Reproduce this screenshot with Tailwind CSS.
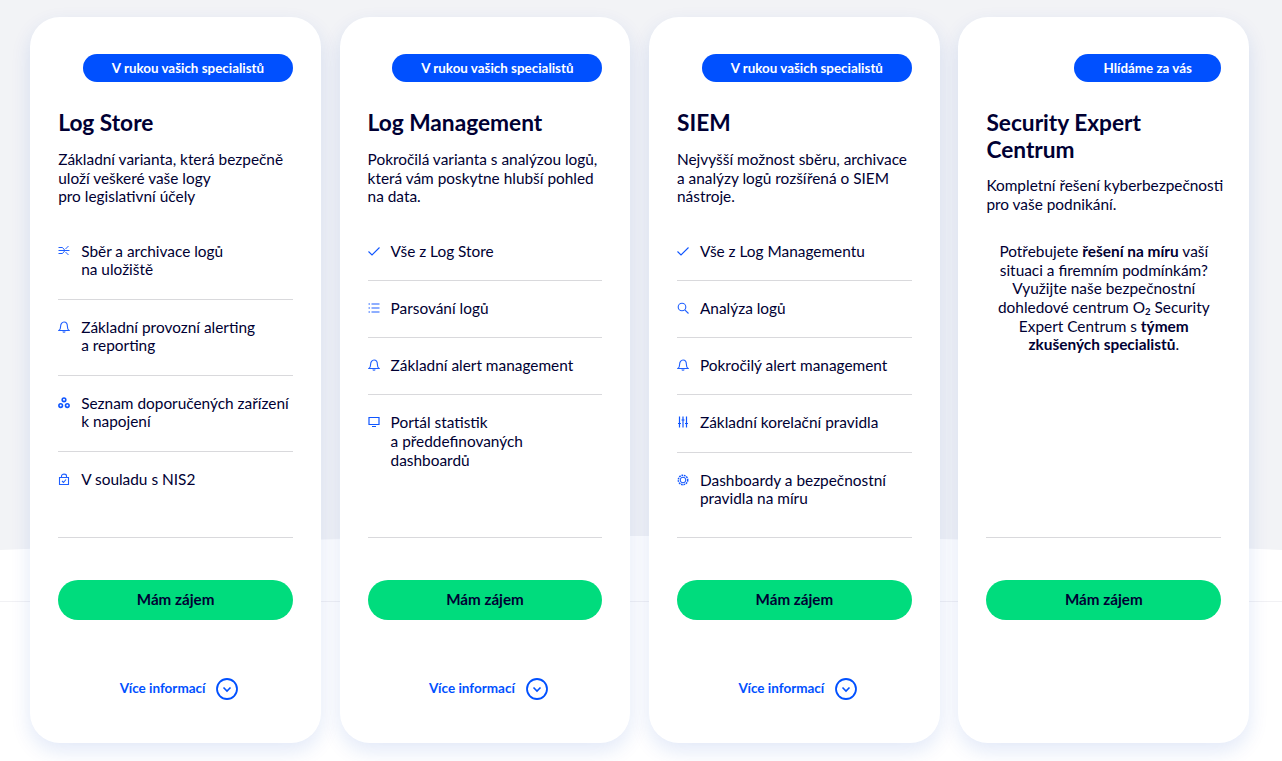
<!doctype html><html><head><meta charset="utf-8"><script src="https://cdn.jsdelivr.net/npm/@tailwindcss/browser@4"></script></head><body class="m-0">
<div class="relative w-[1282px] h-[761px] overflow-hidden bg-[#f2f3f6] font-['Lato',sans-serif] text-[#000033] text-[15.4px] leading-[18.67px]">
<svg class="absolute inset-0" width="1282" height="761" viewBox="0 0 1282 761"><path d="M0 550Q641 522 1282 550V761H0Z" fill="#fff"/><path d="M0 601.5H1282" stroke="#f1f1f4" stroke-width="1"/></svg>
<div class="relative grid grid-cols-4 gap-[18.6px] w-[1219px] ml-[30.2px] pt-[17px]">

<!-- card 1 -->
<article class="bg-white rounded-[30px] h-[726px] px-[28px] pt-[37px] flex flex-col shadow-[0_8px_20px_rgba(20,70,200,0.12)]">
<div class="flex justify-end"><span class="h-[28px] w-[210px] text-center rounded-full bg-[#0050ff] text-white font-bold text-[13.4px] leading-[28px] whitespace-nowrap">V rukou vašich specialistů</span></div>
<header class="h-[113px] mt-[27px]"><h2 class="font-bold text-[22.7px] leading-[27px]">Log Store</h2><p class="mt-[14px]">Základní varianta, která bezpečně<br>uloží veškeré vaše logy<br>pro legislativní účely</p></header>
<ul class="h-[314px] mt-[1.5px] border-b border-[#d9d9dc]">
<li class="flex gap-[11px] pt-[18px] pb-[19.67px] border-b border-[#d9d9dc]"><svg class="mt-[3px] shrink-0" width="12" height="12" viewBox="0 0 12 12" fill="none" stroke="#1f5fff" stroke-width="1"><path d="M.5 2.500H4.500L7 5.500M.5 5.500H11.500M.5 8.500H4.500L7 5.500M7.500 4L10.500 1M7.500 7L10.500 10"/></svg><span>Sběr a archivace logů<br>na uložiště</span></li>
<li class="flex gap-[11px] pt-[18px] pb-[19.67px] border-b border-[#d9d9dc]"><svg class="mt-[3px] shrink-0" width="12" height="12" viewBox="0 0 12 12" fill="none" stroke="#1f5fff" stroke-width="1.100"><path d="M1 9.500C2.300 8.500 2.600 7.500 2.600 5.500C2.600 3 4 1 6 1S9.400 3 9.400 5.500C9.400 7.500 9.700 8.500 11 9.500ZM4.800 10.500C5.200 11.500 6.800 11.500 7.200 10.500"/></svg><span>Základní provozní alerting<br>a reporting</span></li>
<li class="flex gap-[11px] pt-[18px] pb-[19.67px] border-b border-[#d9d9dc]"><svg class="mt-[3px] shrink-0" width="12" height="12" viewBox="0 0 12 12" fill="none" stroke="#0f55ff" stroke-width="1.600"><circle cx="6" cy="2.800" r="1.800"/><circle cx="2.700" cy="8.600" r="1.800"/><circle cx="9.300" cy="8.600" r="1.800"/></svg><span>Seznam doporučených zařízení<br>k napojení</span></li>
<li class="flex gap-[11px] pt-[18px] pb-[19.67px]"><svg class="mt-[3px] shrink-0" width="12" height="12" viewBox="0 0 12 12" fill="none" stroke="#1f5fff" stroke-width="1.100"><path d="M1.500 4.500H10.500V11.500H1.500ZM3.500 4.500V3C3.500 .5 8.500 .5 8.500 3V4.500M4 8L5.500 9.500L8 6.500"/></svg><span>V souladu s NIS2</span></li>
</ul>
<a class="mt-[42px] h-[40px] shrink-0 rounded-full bg-[#00dc7d] font-bold text-[15.2px] leading-[38px] text-center">Mám zájem</a>
<a class="mt-[58px] h-[22px] pl-[7px] flex items-center justify-center gap-[11px] text-[#0050ff] font-bold text-[13.5px]">Více informací<svg width="22" height="22" viewBox="0 0 22 22" fill="none" stroke="#0050ff"><circle cx="11" cy="11" r="10" stroke-width="1.800"/><path d="M7.500 9.500L11 13L14.500 9.500" stroke-width="1.600"/></svg></a>
</article>

<!-- card 2 -->
<article class="bg-white rounded-[30px] h-[726px] px-[28px] pt-[37px] flex flex-col shadow-[0_8px_20px_rgba(20,70,200,0.12)]">
<div class="flex justify-end"><span class="h-[28px] w-[210px] text-center rounded-full bg-[#0050ff] text-white font-bold text-[13.4px] leading-[28px] whitespace-nowrap">V rukou vašich specialistů</span></div>
<header class="h-[113px] mt-[27px]"><h2 class="font-bold text-[22.7px] leading-[27px]">Log Management</h2><p class="mt-[14px]">Pokročilá varianta s analýzou logů,<br>která vám poskytne hlubší pohled<br>na data.</p></header>
<ul class="h-[314px] mt-[1.5px] border-b border-[#d9d9dc]">
<li class="flex gap-[11px] pt-[18px] pb-[19.67px] border-b border-[#d9d9dc]"><svg class="mt-[3px] shrink-0" width="12" height="12" viewBox="0 0 12 12" fill="none" stroke="#0f55ff" stroke-width="1.100"><path d="M.5 6.500L4 10L11.500 2.500"/></svg><span>Vše z Log Store</span></li>
<li class="flex gap-[11px] pt-[18px] pb-[19.67px] border-b border-[#d9d9dc]"><svg class="mt-[3px] shrink-0" width="12" height="12" viewBox="0 0 12 12" fill="none" stroke="#1f5fff" stroke-width="1.100"><path d="M3.500 2H11.500M3.500 6H11.500M3.500 10H11.500M.5 2H2M.5 6H2M.5 10H2"/></svg><span>Parsování logů</span></li>
<li class="flex gap-[11px] pt-[18px] pb-[19.67px] border-b border-[#d9d9dc]"><svg class="mt-[3px] shrink-0" width="12" height="12" viewBox="0 0 12 12" fill="none" stroke="#1f5fff" stroke-width="1.100"><path d="M1 9.500C2.300 8.500 2.600 7.500 2.600 5.500C2.600 3 4 1 6 1S9.400 3 9.400 5.500C9.400 7.500 9.700 8.500 11 9.500ZM4.800 10.500C5.200 11.500 6.800 11.500 7.200 10.500"/></svg><span>Základní alert management</span></li>
<li class="flex gap-[11px] pt-[18px] pb-[19.67px]"><svg class="mt-[3px] shrink-0" width="12" height="12" viewBox="0 0 12 12" fill="none" stroke="#0f55ff" stroke-width="1.200"><path d="M1 1.500H11V8.500H1ZM4 10.500H8"/></svg><span>Portál statistik<br>a předdefinovaných<br>dashboardů</span></li>
</ul>
<a class="mt-[42px] h-[40px] shrink-0 rounded-full bg-[#00dc7d] font-bold text-[15.2px] leading-[38px] text-center">Mám zájem</a>
<a class="mt-[58px] h-[22px] pl-[7px] flex items-center justify-center gap-[11px] text-[#0050ff] font-bold text-[13.5px]">Více informací<svg width="22" height="22" viewBox="0 0 22 22" fill="none" stroke="#0050ff"><circle cx="11" cy="11" r="10" stroke-width="1.800"/><path d="M7.500 9.500L11 13L14.500 9.500" stroke-width="1.600"/></svg></a>
</article>

<!-- card 3 -->
<article class="bg-white rounded-[30px] h-[726px] px-[28px] pt-[37px] flex flex-col shadow-[0_8px_20px_rgba(20,70,200,0.12)]">
<div class="flex justify-end"><span class="h-[28px] w-[210px] text-center rounded-full bg-[#0050ff] text-white font-bold text-[13.4px] leading-[28px] whitespace-nowrap">V rukou vašich specialistů</span></div>
<header class="h-[113px] mt-[27px]"><h2 class="font-bold text-[22.7px] leading-[27px]">SIEM</h2><p class="mt-[14px]">Nejvyšší možnost sběru, archivace<br>a analýzy logů rozšířená o SIEM<br>nástroje.</p></header>
<ul class="h-[314px] mt-[1.5px] border-b border-[#d9d9dc]">
<li class="flex gap-[11px] pt-[18px] pb-[19.67px] border-b border-[#d9d9dc]"><svg class="mt-[3px] shrink-0" width="12" height="12" viewBox="0 0 12 12" fill="none" stroke="#0f55ff" stroke-width="1.100"><path d="M.5 6.500L4 10L11.500 2.500"/></svg><span>Vše z Log Managementu</span></li>
<li class="flex gap-[11px] pt-[18px] pb-[19.67px] border-b border-[#d9d9dc]"><svg class="mt-[3px] shrink-0" width="12" height="12" viewBox="0 0 12 12" fill="none" stroke="#1f5fff" stroke-width="1.100"><circle cx="5" cy="5" r="3.800"/><path d="M7.800 7.800L11.500 11.500"/></svg><span>Analýza logů</span></li>
<li class="flex gap-[11px] pt-[18px] pb-[19.67px] border-b border-[#d9d9dc]"><svg class="mt-[3px] shrink-0" width="12" height="12" viewBox="0 0 12 12" fill="none" stroke="#1f5fff" stroke-width="1.100"><path d="M1 9.500C2.300 8.500 2.600 7.500 2.600 5.500C2.600 3 4 1 6 1S9.400 3 9.400 5.500C9.400 7.500 9.700 8.500 11 9.500ZM4.800 10.500C5.200 11.500 6.800 11.500 7.200 10.500"/></svg><span>Pokročilý alert management</span></li>
<li class="flex gap-[11px] pt-[18px] pb-[19.67px] border-b border-[#d9d9dc]"><svg class="mt-[3px] shrink-0" width="12" height="12" viewBox="0 0 12 12" fill="none" stroke="#0f55ff" stroke-width="1.200"><path d="M2.500 .5V11.500M6 .5V11.500M9.500 .5V11.500M1 7.500H4M4.500 4H7.500M8 7.500H11" /></svg><span>Základní korelační pravidla</span></li>
<li class="flex gap-[11px] pt-[18px] pb-[19.67px]"><svg class="mt-[3px] shrink-0" width="12" height="12" viewBox="0 0 12 12" fill="none" stroke="#0f55ff"><circle cx="6" cy="6" r="2.800" stroke-width="1"/><circle cx="6" cy="6" r="4.700" stroke-width="1.500" stroke-dasharray="1.700 .8"/></svg><span>Dashboardy a bezpečnostní<br>pravidla na míru</span></li>
</ul>
<a class="mt-[42px] h-[40px] shrink-0 rounded-full bg-[#00dc7d] font-bold text-[15.2px] leading-[38px] text-center">Mám zájem</a>
<a class="mt-[58px] h-[22px] pl-[7px] flex items-center justify-center gap-[11px] text-[#0050ff] font-bold text-[13.5px]">Více informací<svg width="22" height="22" viewBox="0 0 22 22" fill="none" stroke="#0050ff"><circle cx="11" cy="11" r="10" stroke-width="1.800"/><path d="M7.500 9.500L11 13L14.500 9.500" stroke-width="1.600"/></svg></a>
</article>

<!-- card 4 -->
<article class="bg-white rounded-[30px] h-[726px] px-[28px] pt-[37px] flex flex-col shadow-[0_8px_20px_rgba(20,70,200,0.12)]">
<div class="flex justify-end"><span class="h-[28px] w-[147px] text-center rounded-full bg-[#0050ff] text-white font-bold text-[13.4px] leading-[28px] whitespace-nowrap">Hlídáme za vás</span></div>
<header class="h-[113px] mt-[27px]"><h2 class="font-bold text-[22.7px] leading-[27px]">Security Expert<br>Centrum</h2><p class="mt-[13px] whitespace-nowrap">Kompletní řešení kyberbezpečnosti<br>pro vaše podnikání.</p></header>
<div class="h-[314px] mt-[1.5px] border-b border-[#d9d9dc] pt-[18.5px] text-center"><p>Potřebujete <b>řešení na míru</b> vaší<br>situaci a firemním podmínkám?<br>Využijte naše bezpečnostní<br>dohledové centrum O<sub class="text-[9.5px] font-bold leading-none">2</sub> Security<br>Expert Centrum s <b>týmem</b><br><b>zkušených specialistů</b>.</p></div>
<a class="mt-[42px] h-[40px] shrink-0 rounded-full bg-[#00dc7d] font-bold text-[15.2px] leading-[38px] text-center">Mám zájem</a>
</article>
</div>
</div>
</body></html>
